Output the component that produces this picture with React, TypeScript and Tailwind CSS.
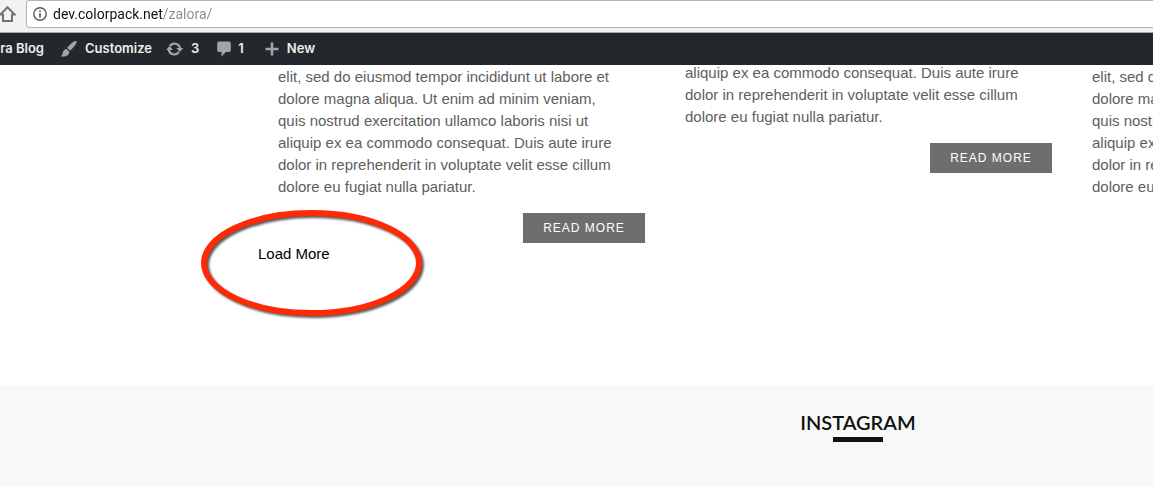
import { ReactNode } from "react"

interface Post {
    id: number;
    text: string;
    className: string;
    hasLink: boolean;
}

const posts: Post[] = [
    {
        id: 1,
        text: "elit, sed do eiusmod tempor incididunt ut labore et dolore magna aliqua. Ut enim ad minim veniam, quis nostrud exercitation ullamco laboris nisi ut aliquip ex ea commodo consequat. Duis aute irure dolor in reprehenderit in voluptate velit esse cillum dolore eu fugiat nulla pariatur.",
        className: "pt-px",
        hasLink: true
    },
    {
        id: 2,
        text: "aliquip ex ea commodo consequat. Duis aute irure dolor in reprehenderit in voluptate velit esse cillum dolore eu fugiat nulla pariatur.",
        className: "-mt-[3px]",
        hasLink: true
    },
    {
        id: 3,
        text: "elit, sed do eiusmod tempor incididunt ut labore et dolore magna aliqua. Ut enim ad minim veniam, quis nostrud exercitation ullamco laboris nisi ut aliquip ex ea commodo consequat. Duis aute irure dolor in reprehenderit in voluptate velit esse cillum dolore eu fugiat nulla pariatur.",
        className: "pt-px",
        hasLink: false
    }
]

// icons

const HomeIcon = () => (
    <svg width="17" height="18" viewBox="0 0 17 18" fill="none" stroke="#727272" strokeWidth="2" aria-hidden="true">
        <path d="M1.2 9.6 8.5 2.2l7.3 7.4H13V16H4V9.6Z" />
    </svg>
)

const InfoIcon = () => (
    <svg className="shrink-0" width="14" height="14" viewBox="0 0 14 14" aria-hidden="true">
        <circle cx="7" cy="7" r="6.2" fill="none" stroke="#5a5a5a" strokeWidth="1.4" />
        <path d="M6.2 6h1.6v4.5H6.2zM6.2 3.4h1.6V5H6.2z" fill="#5a5a5a" />
    </svg>
)

const BrushIcon = () => (
    <svg width="18" height="18" viewBox="0 0 18 18" fill="#a0a5aa" aria-hidden="true">
        <path d="M16.5 1.2c.5.5.1 1.6-.7 2.7-1.6 2.5-4 5.3-5.6 6.7L7.1 7.900C8.800 5.800 11 3.400 13.200 2c1.400-.9 2.800-1.400 3.300-.8Z" />
        <path d="M6.400 8.700 9.300 11.500c.1 2-1 3.600-3 4.400-1.800.7-4 .8-5.800.4 1.100-.6 1.700-1.400 2-2.600.5-2.200 1.400-4.500 3.900-5Z" />
    </svg>
)

const UpdateIcon = () => (
    <svg width="18" height="16" viewBox="0 0 18 16" aria-hidden="true">
        <path d="M3.900 5.200A5.500 5.500 0 0 1 14 7.500M12.900 10.800A5.500 5.500 0 0 1 2.800 8.500" fill="none" stroke="#a0a5aa" strokeWidth="2.2" />
        <path d="M10.300 7h7L13.800 11ZM0 9h7L3.500 5Z" fill="#a0a5aa" />
    </svg>
)

const CommentIcon = () => (
    <svg width="14" height="16" viewBox="0 0 14 16" fill="#a0a5aa" aria-hidden="true">
        <path d="M2 .5h10a1.800 1.800 0 0 1 1.800 1.800v6.900a1.800 1.800 0 0 1-1.800 1.800H8.800L4.500 15.800V11H2A1.800 1.800 0 0 1 .2 9.200V2.300A1.800 1.800 0 0 1 2 .5Z" />
    </svg>
)

const PlusIcon = () => (
    <svg width="14" height="14" viewBox="0 0 14 14" fill="#a0a5aa" aria-hidden="true">
        <path d="M5.700.5h2.600v5.200h5.200v2.600H8.300v5.200H5.700V8.300H.5V5.700h5.200z" />
    </svg>
)

// admin bar entry

const AdminLink = ({ className, icon, children }: { className: string, icon?: ReactNode, children: ReactNode }) => (
    <a href="#" className={`flex items-center whitespace-nowrap ${className}`}>
        {icon}
        <span>{children}</span>
    </a>
)

const App = () => {
    return (
        <div className="min-h-screen overflow-hidden bg-white font-['Liberation_Sans',Arial,sans-serif]">
            <div className="flex h-[33px] items-start border-b border-[#a9a9a9] bg-[#f2f2f2]">
                <button type="button" aria-label="Home" className="mt-[5px] -ml-px w-[27px] shrink-0">
                    <HomeIcon />
                </button>
                <label className="-mr-2 flex h-7 flex-1 items-center gap-[6px] rounded-[3px] border border-[#b4b4b4] bg-white pl-[6px]">
                    <InfoIcon />
                    <input
                        type="text"
                        aria-label="Address"
                        defaultValue="dev.colorpack.net/zalora/"
                        className="w-full bg-[linear-gradient(to_right,#111_110px,#8c8c8c_110px)] bg-clip-text font-[Roboto,sans-serif] text-sm text-transparent outline-none"
                    />
                </label>
            </div>
            <nav className="flex h-8 items-center bg-[#23282d] font-[Inter,sans-serif] text-[13px] font-semibold text-[#eeeeee]">
                <AdminLink className="-ml-4 w-[60px] justify-end">Zalora Blog</AdminLink>
                <AdminLink className="ml-4 gap-[7px]" icon={<BrushIcon />}>Customize</AdminLink>
                <AdminLink className="ml-[14px] gap-[7px]" icon={<UpdateIcon />}>3</AdminLink>
                <AdminLink className="ml-[18px] gap-[7px]" icon={<CommentIcon />}>1</AdminLink>
                <AdminLink className="ml-[21px] gap-2" icon={<PlusIcon />}>New</AdminLink>
            </nav>
            <main className="h-80 overflow-hidden">
                <div className="ml-[258px] w-[1201px]">
                    <div className="grid grid-cols-3 items-start gap-5">
                        {
                            posts.map(post => (
                                <article key={post.id} className={`flex flex-col ${post.className}`}>
                                    <p className="px-5 text-[15px] leading-[22px] text-[#5e5e5e]">{post.text}</p>
                                    {
                                        post.hasLink ?
                                        <a href="#" className="mt-[15px] flex h-[30px] w-[122px] items-center justify-center self-end bg-[#6e6e6e] text-xs tracking-[1px] text-white">
                                            READ MORE
                                        </a>
                                        : <></>
                                    }
                                </article>
                            ))
                        }
                    </div>
                    <div className="relative w-fit">
                        <button type="button" className="block text-[15px] leading-[22px] text-black">Load More</button>
                        <svg className="pointer-events-none absolute -top-9 -left-[60px]" width="230" height="114" viewBox="0 0 230 114" fill="none" aria-hidden="true">
                            <ellipse cx="113.5" cy="56" rx="107.5" ry="50" stroke="#ff2a05" strokeWidth="6" className="drop-shadow-[2px_2px_1px_rgba(0,0,0,0.65)]" />
                        </svg>
                    </div>
                </div>
            </main>
            <section className="min-h-[101px] bg-[#f8f8f8] pt-6">
                <div className="ml-[258px] flex w-[1200px] flex-col items-center">
                    <h2 className="font-[Lato,sans-serif] text-xl leading-[26px] font-semibold text-[#111111]">INSTAGRAM</h2>
                    <div className="mt-[2px] h-[5px] w-[50px] bg-[#111111]"></div>
                </div>
            </section>
        </div>
    )
}

export default App
